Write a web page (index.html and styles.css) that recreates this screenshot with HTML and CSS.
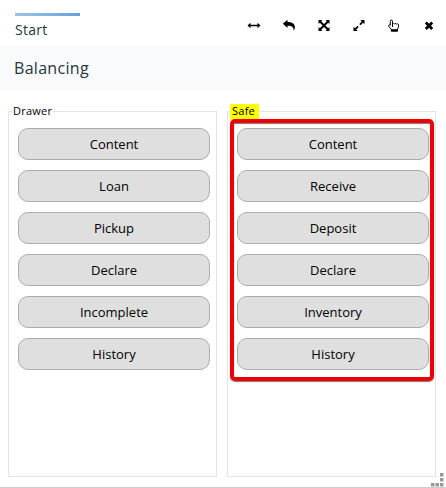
FILE: index.html
```html
<!DOCTYPE html>
<html lang="en">
<head>
<meta charset="utf-8">
<title>Balancing</title>
<link rel="stylesheet" href="styles.css">
</head>
<body>
<div class="window">
  <header class="topbar">
    <div class="tab">Start</div>
    <nav class="tools">
      <svg viewBox="0 0 14 14"><path d="M.5 7.500l3-2.800v2.100h7V4.700l3 2.800-3 2.800V8.200h-7v2.100z"/></svg>
      <svg viewBox="0 0 14 14"><path d="M.8 5.800L5.500 1.700v2.400c4.500 0 7.400 1.700 7.400 5.200 0 1.400-.6 2.600-1.400 3.300.5-3.400-1.600-4.800-6-4.800v2.200z"/></svg>
      <svg viewBox="0 0 14 14"><path d="M1.500 2h4L4.200 3.300 7 6.100l2.800-2.800L8.500 2h4v4l-1.300-1.300L8.400 7.500l2.800 2.800L12.500 9v4h-4l1.300-1.300L7 8.900l-2.800 2.800L5.500 13h-4V9l1.300 1.300 2.800-2.800-2.800-2.800L1.500 6z"/></svg>
      <svg viewBox="0 0 14 14"><path d="M8.300 2h4.200v4.200L11 4.700 8.500 7.200 7.300 6l2.500-2.500zM1.500 8.800L3 10.300l2.500-2.500L6.700 9l-2.500 2.500L5.700 13H1.500z"/></svg>
      <svg viewBox="0 0 14 14"><path class="hand" d="M5.500 9V3.200c0-1.600-2.200-1.600-2.200 0v4C1.800 6.300.9 7.600 2 8.700l2.300 2.600v1.900h6.200v-2l1-2.400V6.700c0-1-1.500-1.300-1.900-.5-.3-.9-1.600-.9-2-.1-.4-.8-1.700-.6-2.100 0"/><path d="M4 11.200h6.700v2H4z"/></svg>
      <svg viewBox="0 0 14 14"><path d="M4.800 3.500L7 5.700l2.200-2.200 2 2L9 7.700l2.200 2.200-2 2L7 9.700l-2.200 2.200-2-2L5 7.700 2.800 5.500z"/></svg>
    </nav>
  </header>
  <h1 class="title">Balancing</h1>
  <main class="groups">
    <section class="group">
      <h2 class="legend">Drawer</h2>
      <div class="buttons">
        <button>Content</button>
        <button>Loan</button>
        <button>Pickup</button>
        <button>Declare</button>
        <button>Incomplete</button>
        <button>History</button>
      </div>
    </section>
    <section class="group">
      <h2 class="legend marked">Safe</h2>
      <div class="buttons">
        <button>Content</button>
        <button>Receive</button>
        <button>Deposit</button>
        <button>Declare</button>
        <button>Inventory</button>
        <button>History</button>
      </div>
      <div class="outline"></div>
    </section>
  </main>
  <svg class="grip" viewBox="0 0 14 14"><path d="M9 0h3.500v3.500H9zM9 5h3.500v3.500H9zM9 10h3.500v3.500H9zM4.500 10H8v3.500H4.500zM0 10h3.500v3.500H0z"/></svg>
</div>
</body>
</html>
```
FILE: styles.css
```css
* { box-sizing: border-box; }
body {
  margin: 0;
  background: #fff;
  color: #000;
  font-family: "Open Sans", "Noto Sans", sans-serif;
}
.window {
  position: relative;
  display: flex;
  flex-direction: column;
  height: 488px;
  border-bottom: 1px solid #ccc;
}
.topbar {
  display: flex;
  justify-content: space-between;
  height: 46px;
  padding: 13px 10px 0 15px;
}
.tab {
  width: 65px;
  height: 30px;
  padding-top: 7px;
  background: linear-gradient(90deg, #9cc3e9, #65a2db) top / 100% 3px no-repeat;
  color: #273541;
  font-size: 14px;
  letter-spacing: .25px;
  line-height: 20px;
}
.tools {
  display: flex;
  gap: 21px;
  padding-top: 5px;
}
.tools svg { width: 14px; height: 14px; }
.tools .hand { fill: #fff; stroke: #000; stroke-width: 1; }
.title {
  height: 44px;
  margin: 0;
  padding-left: 14px;
  background: #f8fafc;
  color: #273541;
  font-size: 16px;
  font-weight: 400;
  letter-spacing: .3px;
  line-height: 44px;
}
.groups {
  display: flex;
  gap: 10px;
  padding: 21px 10px 10px 8px;
  flex: 1;
}
.group {
  position: relative;
  width: 209px;
  border: 1px solid #e5e5e5;
}
.legend {
  position: absolute;
  top: -8px;
  left: 4px;
  height: 16px;
  margin: 0;
  background: #fff;
  font-size: 11px;
  font-weight: 400;
  letter-spacing: .25px;
  line-height: 14px;
}
.legend.marked {
  left: 2px;
  width: 29px;
  padding-left: 2px;
  background: #ff0;
}
.buttons {
  display: flex;
  flex-direction: column;
  gap: 10px;
  padding: 16px 6px 0 9px;
}
.buttons button {
  height: 32px;
  padding: 0;
  border: 1px solid #acacac;
  border-radius: 10px;
  background: #dfdfdf;
  color: #000;
  font: 13px/30px "Open Sans", "Noto Sans", sans-serif;
}
.outline {
  position: absolute;
  top: 7px;
  left: 2px;
  width: 204px;
  height: 262px;
  border: 4px solid #ee0005;
  border-radius: 5px;
  box-shadow: 0 1px 1px #777, inset 0 1px 1px #777;
}
.grip {
  position: absolute;
  right: 1px;
  bottom: 0;
  width: 14px;
  height: 14px;
  fill: #999;
}
```
